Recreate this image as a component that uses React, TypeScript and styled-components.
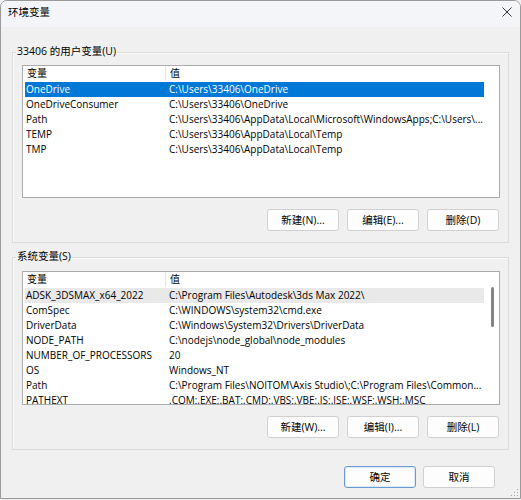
import styled, { createGlobalStyle } from "styled-components";

const GlobalStyle = createGlobalStyle`
  *, *::before, *::after {
    box-sizing: border-box;
  }
  body {
    margin: 0;
    background: #f0f0f0;
    font-family: "Open Sans", "Noto Sans CJK SC", sans-serif;
    font-size: 10px;
    color: #000;
  }
`;

const Window = styled.div`
  width: 521px;
  height: 499px;
  border: 1px solid #9a9a9a;
  border-radius: 7px 7px 0 0;
  background: #f0f0f0;
  display: flex;
  flex-direction: column;
  overflow: hidden;
`;

const TitleBar = styled.div`
  height: 26px;
  flex: none;
  display: flex;
  align-items: center;
  justify-content: space-between;
  padding: 0 8px 4px 7px;
  background: #f3f5f8;
  font-size: 10.5px;
  line-height: 14px;
`;

const CloseBox = styled.div`
  width: 20px;
  height: 20px;
  display: flex;
  align-items: center;
  justify-content: center;
  margin-right: -5px;
`;

const Content = styled.div`
  flex: 1;
  display: flex;
  flex-direction: column;
  padding: 18px 11px 0 11px;
  position: relative;
`;

const GroupBox = styled.fieldset<{ $gap: number }>`
  margin: 0;
  min-width: 0;
  border: 1px solid #dcdcdc;
  box-shadow: inset 1px 1px 0 #fafafa;
  padding: ${({ $gap }) => $gap}px 8px 11px 9px;
  display: flex;
  flex-direction: column;
  & + & {
    margin-top: 7px;
  }
`;

const Legend = styled.legend`
  padding: 0 1px 2px;
  margin-left: -6px;
  line-height: 12px;
  font-size: 10.5px;
`;

const ListView = styled.div<{ $height: number }>`
  height: ${({ $height }) => $height}px;
  background: #fff;
  border: 1px solid #ababab;
  overflow: hidden;
  position: relative;
`;

const HeaderRow = styled.div`
  display: flex;
  height: 15px;
  line-height: 15px;
  padding-left: 3px;
  margin-bottom: 1px;
`;

const HeaderCell = styled.div<{ $first?: boolean }>`
  width: ${({ $first }) => ($first ? "140px" : "auto")};
  flex: ${({ $first }) => ($first ? "none" : "1")};
  padding-left: ${({ $first }) => ($first ? "1px" : "4px")};
  border-right: ${({ $first }) => ($first ? "1px solid #e5e5e5" : "none")};
  white-space: nowrap;
`;

const Row = styled.div<{ $state?: "selected" | "hover" }>`
  display: flex;
  height: 15px;
  line-height: 15px;
  margin-left: 2px;
  width: 459px;
  white-space: nowrap;
  background: ${({ $state }) =>
    $state === "selected" ? "#0078d7" : $state === "hover" ? "#e9e9e9" : "transparent"};
  color: ${({ $state }) => ($state === "selected" ? "#fff" : "#000")};
`;

const NameCell = styled.div`
  width: 140px;
  flex: none;
  padding-left: 1px;
  overflow: hidden;
`;

const ValueCell = styled.div`
  flex: 1;
  padding-left: 4px;
  overflow: hidden;
`;

const ScrollThumb = styled.div`
  position: absolute;
  right: 5px;
  top: 15px;
  width: 3px;
  height: 40px;
  border-radius: 2px;
  background: #858585;
`;

const ButtonRow = styled.div<{ $gap: number; $right: number }>`
  display: flex;
  justify-content: flex-end;
  gap: ${({ $gap }) => $gap}px;
  padding-right: ${({ $right }) => $right}px;
  margin-top: 11px;
`;

const Button = styled.button<{ $primary?: boolean }>`
  width: 72px;
  height: 22px;
  padding: 0;
  font: inherit;
  font-size: 10.5px;
  line-height: 20px;
  color: #000;
  background: #fdfdfd;
  border: 1px solid ${({ $primary }) => ($primary ? "#6a9bd1" : "#d0d0d0")};
  border-radius: 3px;
  box-shadow: ${({ $primary }) => ($primary ? "inset 0 0 0 1px #dbe8f5" : "none")};
`;

const Footer = styled(ButtonRow)`
  margin-top: 16px;
`;

const Grip = styled.div`
  position: absolute;
  right: 2px;
  bottom: 2px;
  width: 8px;
  height: 8px;
  background-image: radial-gradient(circle, #a8a8a8 0.8px, transparent 1px);
  background-size: 3px 3px;
  clip-path: polygon(100% 0, 100% 100%, 0 100%);
`;

type Variable = { name: string; value: string };

const userVars: Variable[] = [
  { name: "OneDrive", value: "C:\\Users\\33406\\OneDrive" },
  { name: "OneDriveConsumer", value: "C:\\Users\\33406\\OneDrive" },
  { name: "Path", value: "C:\\Users\\33406\\AppData\\Local\\Microsoft\\WindowsApps;C:\\Users\\..." },
  { name: "TEMP", value: "C:\\Users\\33406\\AppData\\Local\\Temp" },
  { name: "TMP", value: "C:\\Users\\33406\\AppData\\Local\\Temp" },
];

const systemVars: Variable[] = [
  { name: "ADSK_3DSMAX_x64_2022", value: "C:\\Program Files\\Autodesk\\3ds Max 2022\\" },
  { name: "ComSpec", value: "C:\\WINDOWS\\system32\\cmd.exe" },
  { name: "DriverData", value: "C:\\Windows\\System32\\Drivers\\DriverData" },
  { name: "NODE_PATH", value: "C:\\nodejs\\node_global\\node_modules" },
  { name: "NUMBER_OF_PROCESSORS", value: "20" },
  { name: "OS", value: "Windows_NT" },
  { name: "Path", value: "C:\\Program Files\\NOITOM\\Axis Studio\\;C:\\Program Files\\Common..." },
  { name: "PATHEXT", value: ".COM;.EXE;.BAT;.CMD;.VBS;.VBE;.JS;.JSE;.WSF;.WSH;.MSC" },
];

function VarList({
  vars,
  height,
  selected,
  hover,
  scroll,
}: {
  vars: Variable[];
  height: number;
  selected?: number;
  hover?: number;
  scroll?: boolean;
}) {
  return (
    <ListView $height={height}>
      <HeaderRow>
        <HeaderCell $first>变量</HeaderCell>
        <HeaderCell>值</HeaderCell>
      </HeaderRow>
      {vars.map((v, i) => (
        <Row
          key={v.name + i}
          $state={i === selected ? "selected" : i === hover ? "hover" : undefined}
        >
          <NameCell>{v.name}</NameCell>
          <ValueCell>{v.value}</ValueCell>
        </Row>
      ))}
      {scroll && <ScrollThumb />}
    </ListView>
  );
}

export default function App() {
  return (
    <>
      <GlobalStyle />
      <Window>
        <TitleBar>
          <span>环境变量</span>
          <CloseBox>
            <svg width="10" height="10" viewBox="0 0 10 10">
              <path d="M0.5 0.5 L9.5 9.5 M9.5 0.5 L0.5 9.5" stroke="#333" strokeWidth="1" />
            </svg>
          </CloseBox>
        </TitleBar>
        <Content>
          <GroupBox $gap={6}>
            <Legend>33406 的用户变量(U)</Legend>
            <VarList vars={userVars} height={133} selected={0} />
            <ButtonRow $gap={8} $right={1}>
              <Button>新建(N)...</Button>
              <Button>编辑(E)...</Button>
              <Button>删除(D)</Button>
            </ButtonRow>
          </GroupBox>
          <GroupBox $gap={7}>
            <Legend>系统变量(S)</Legend>
            <VarList vars={systemVars} height={134} hover={0} scroll />
            <ButtonRow $gap={8} $right={1}>
              <Button>新建(W)...</Button>
              <Button>编辑(I)...</Button>
              <Button>删除(L)</Button>
            </ButtonRow>
          </GroupBox>
          <Footer $gap={7} $right={14}>
            <Button $primary>确定</Button>
            <Button>取消</Button>
          </Footer>
          <Grip />
        </Content>
      </Window>
    </>
  );
}
